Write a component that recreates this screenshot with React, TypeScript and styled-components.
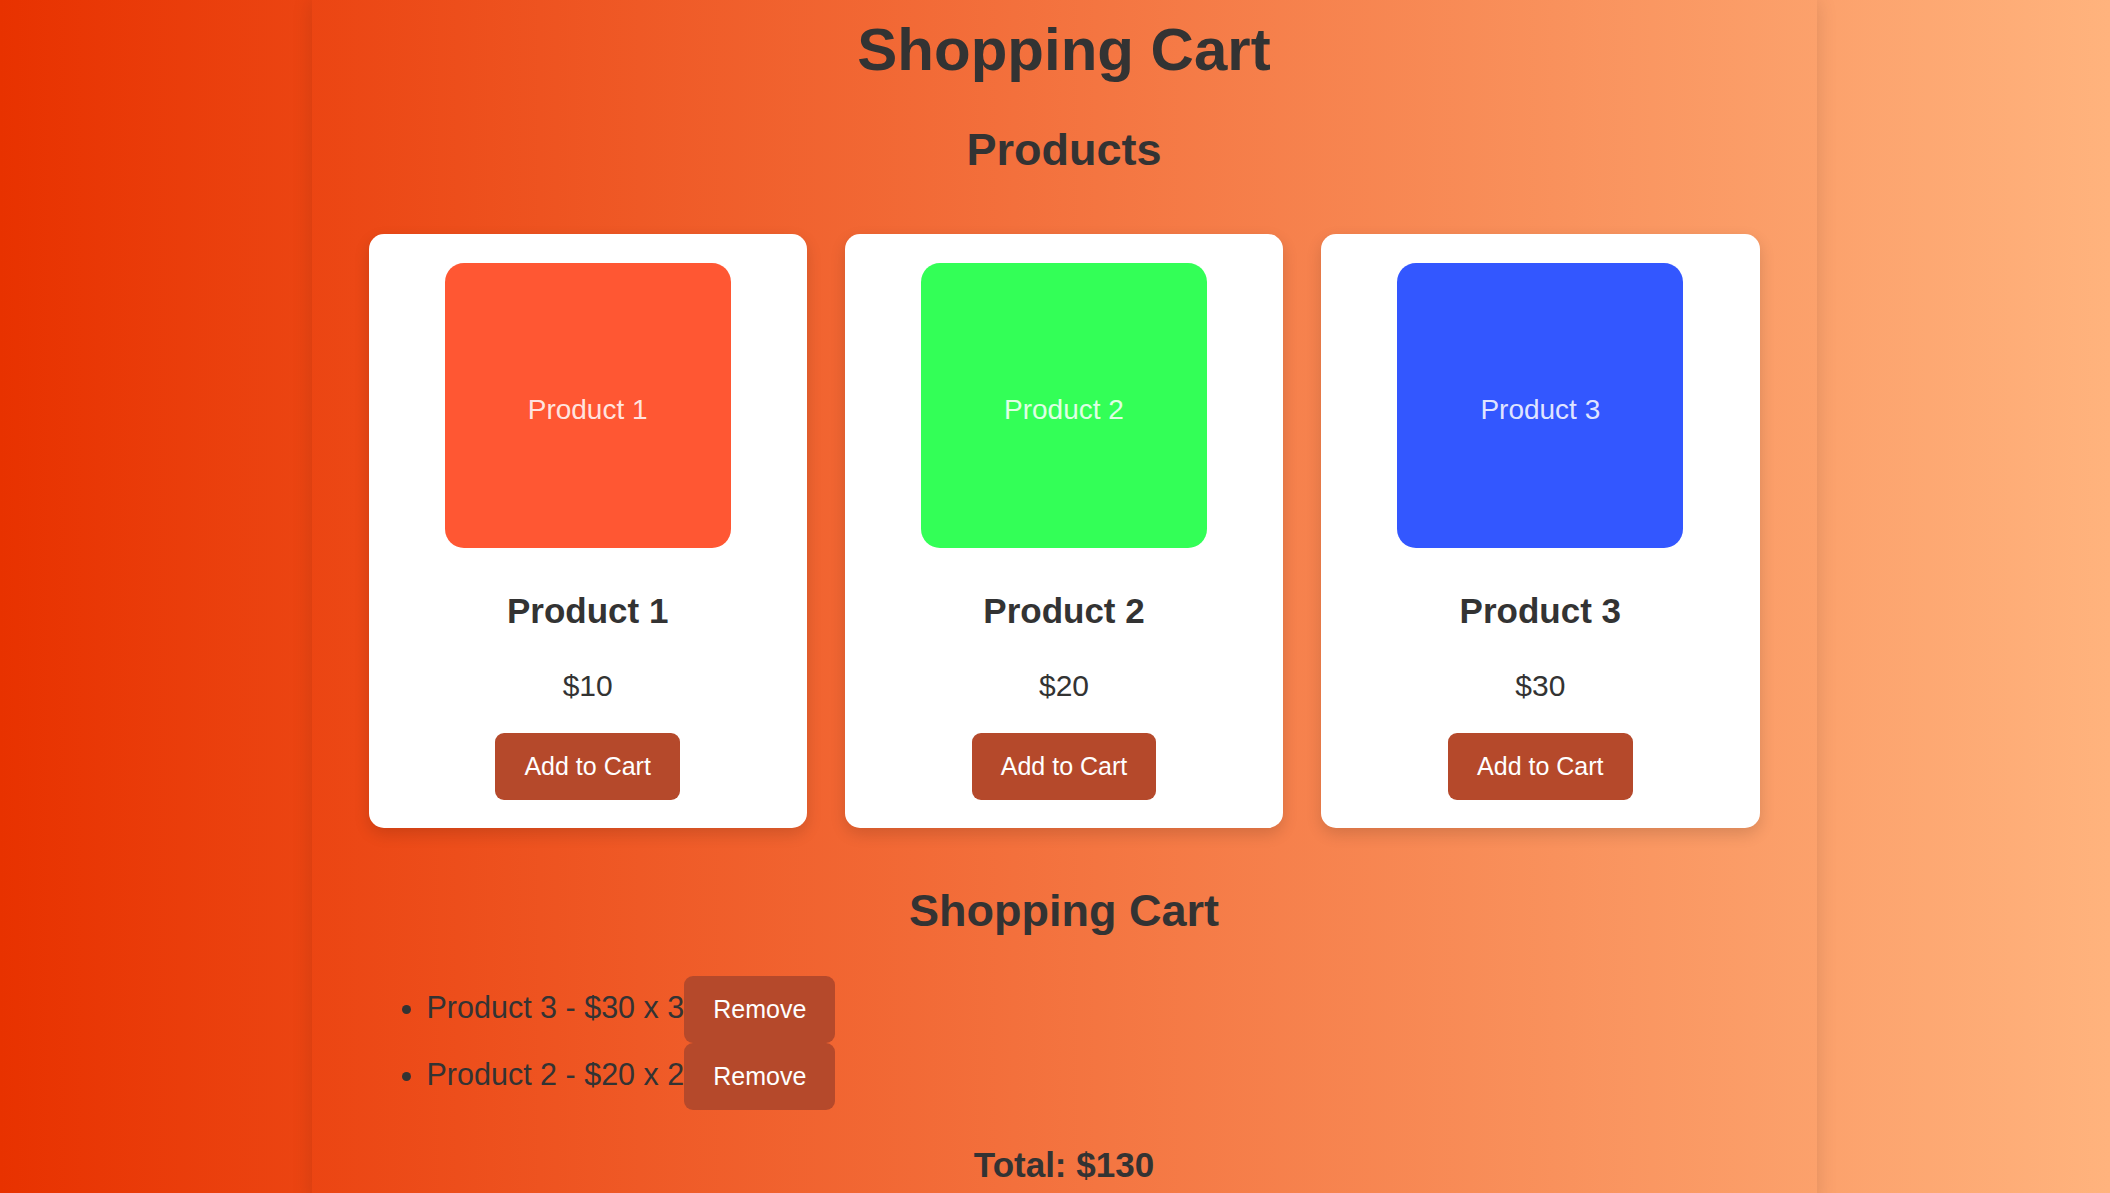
import React, { useState } from "react";
import styled, { createGlobalStyle } from "styled-components";

const GlobalStyle = createGlobalStyle`
  html, body {
    margin: 0;
    padding: 0;
  }
  body {
    min-height: 100vh;
    background: linear-gradient(to right, #e83200, #ffb37d);
    background-attachment: fixed;
    font-family: "Liberation Sans", Arial, sans-serif;
    color: #333;
  }
`;

const Page = styled.div`
  padding-left: 18px;
  display: flex;
  justify-content: center;
`;

const Container = styled.div`
  width: 1505px;
  box-sizing: border-box;
  padding: 0 57px 20px;
  box-shadow: 0 0 20px rgba(0, 0, 0, 0.12);
  text-align: center;
  min-height: 1193px;
`;

const Title = styled.h1`
  margin: 15px 0 0;
  font-size: 60px;
  line-height: 69px;
  font-weight: 700;
  color: #333;
`;

const SectionTitle = styled.h2<{ $top: number }>`
  margin: ${(p) => p.$top}px 0 0;
  font-size: 45px;
  line-height: 52px;
  font-weight: 700;
  color: #333;
`;

const Grid = styled.div`
  margin-top: 58px;
  display: grid;
  grid-template-columns: repeat(3, 1fr);
  gap: 38px;
`;

const Card = styled.div`
  background: #fff;
  border-radius: 15px;
  padding: 29px 28px 28px;
  box-shadow: 0 6px 16px rgba(0, 0, 0, 0.14);
  display: flex;
  flex-direction: column;
  align-items: center;
`;

const Thumb = styled.div<{ $bg: string }>`
  width: 286px;
  height: 285px;
  box-sizing: border-box;
  padding-top: 8px;
  border-radius: 19px;
  background: ${(p) => p.$bg};
  display: flex;
  align-items: center;
  justify-content: center;
  font-size: 28px;
  color: rgba(255, 255, 255, 0.86);
`;

const ProductName = styled.h3`
  margin: 43px 0 0;
  font-size: 35px;
  line-height: 40px;
  font-weight: 700;
  color: #333;
`;

const Price = styled.p`
  margin: 37px 0 0;
  font-size: 30px;
  line-height: 35px;
  color: #333;
`;

const Button = styled.button<{ $top?: number }>`
  margin: ${(p) => p.$top ?? 0}px 0 0;
  font-family: "Liberation Sans", Arial, sans-serif;
  font-size: 25px;
  line-height: 29px;
  padding: 19px 29px;
  border: none;
  border-radius: 9px;
  background: #b5492b;
  color: #fff;
  cursor: pointer;
  vertical-align: baseline;
`;

const CartList = styled.ul`
  margin: 39px 0 0;
  padding: 0 0 0 58px;
  text-align: left;
  list-style: disc;
`;

const CartItem = styled.li`
  font-size: 30.5px;
  line-height: 34px;
  color: #333;
`;

const Total = styled.h3`
  margin: 35px 0 0;
  font-size: 35px;
  line-height: 40px;
  font-weight: 700;
  color: #333;
`;

type Product = { id: number; name: string; price: number; color: string };

const products: Product[] = [
  { id: 1, name: "Product 1", price: 10, color: "#ff5733" },
  { id: 2, name: "Product 2", price: 20, color: "#33ff57" },
  { id: 3, name: "Product 3", price: 30, color: "#3357ff" },
];

export default function App() {
  const [cart, setCart] = useState<{ id: number; qty: number }[]>([
    { id: 3, qty: 3 },
    { id: 2, qty: 2 },
  ]);

  const add = (id: number) =>
    setCart((c) =>
      c.find((i) => i.id === id)
        ? c.map((i) => (i.id === id ? { ...i, qty: i.qty + 1 } : i))
        : [...c, { id, qty: 1 }]
    );
  const remove = (id: number) => setCart((c) => c.filter((i) => i.id !== id));

  const total = cart.reduce(
    (s, i) => s + (products.find((p) => p.id === i.id)?.price ?? 0) * i.qty,
    0
  );

  return (
    <>
      <GlobalStyle />
      <Page>
        <Container>
          <Title>Shopping Cart</Title>
          <SectionTitle $top={40}>Products</SectionTitle>
          <Grid>
            {products.map((p) => (
              <Card key={p.id}>
                <Thumb $bg={p.color}>{p.name}</Thumb>
                <ProductName>{p.name}</ProductName>
                <Price>${p.price}</Price>
                <Button $top={30} onClick={() => add(p.id)}>
                  Add to Cart
                </Button>
              </Card>
            ))}
          </Grid>
          <SectionTitle $top={57}>Shopping Cart</SectionTitle>
          <CartList>
            {cart.map((i) => {
              const p = products.find((x) => x.id === i.id)!;
              return (
                <CartItem key={i.id}>
                  {p.name} - ${p.price} x {i.qty}
                  <Button onClick={() => remove(i.id)}>Remove</Button>
                </CartItem>
              );
            })}
          </CartList>
          <Total>Total: ${total}</Total>
        </Container>
      </Page>
    </>
  );
}
